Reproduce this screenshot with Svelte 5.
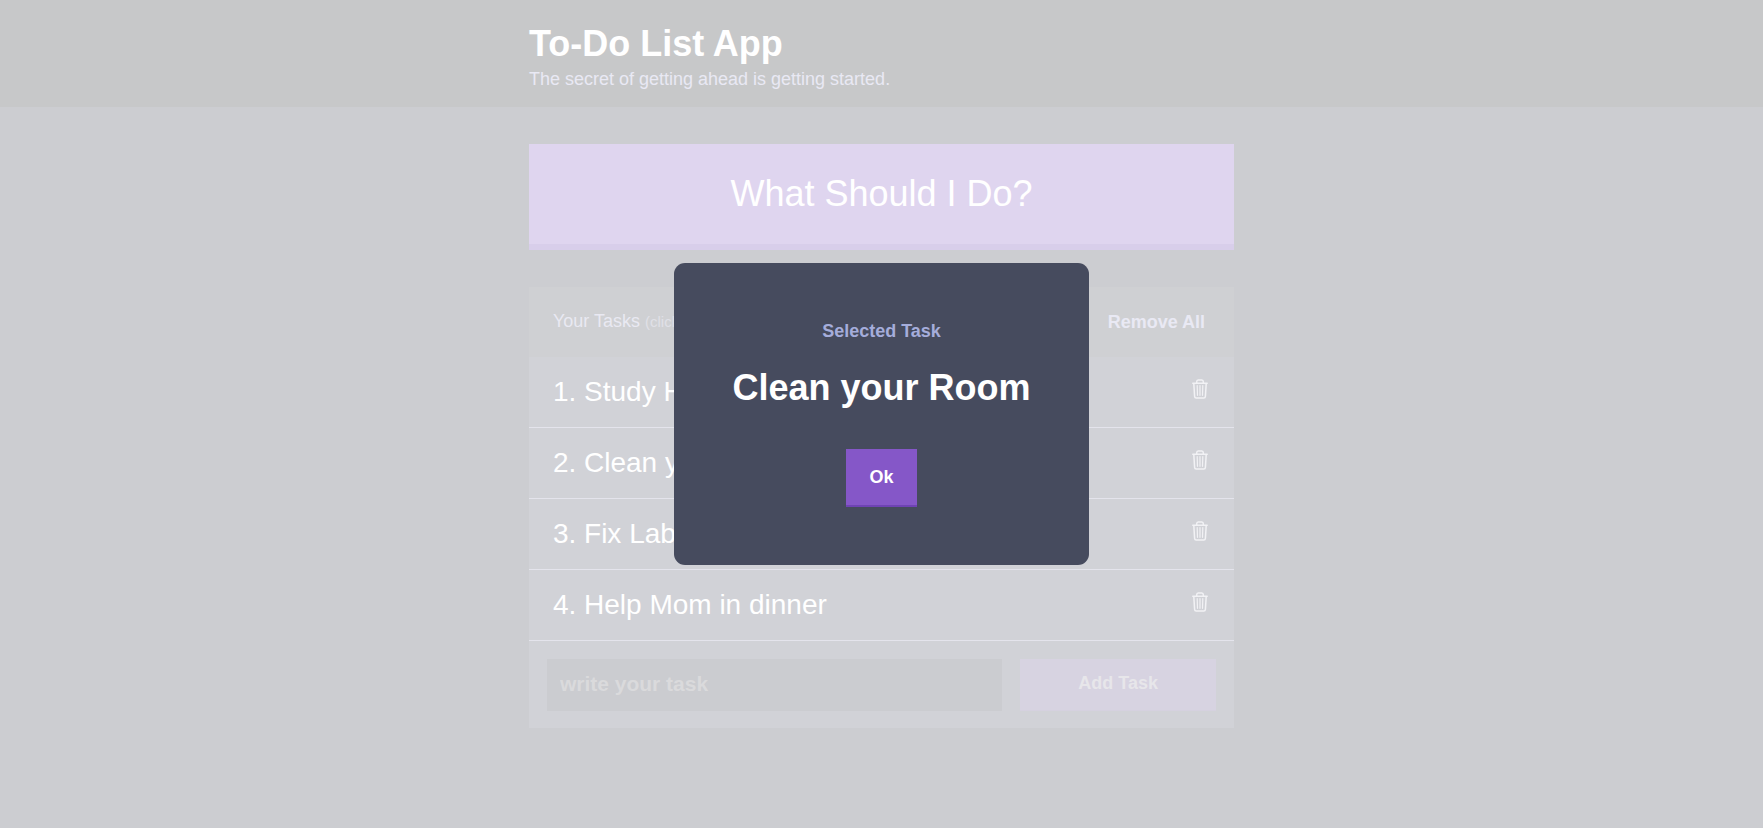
<script>
  let tasks = $state(['Study H', 'Clean your Room', 'Fix Lab', 'Help Mom in dinner']);
  let selected = $state('Clean your Room');
  let draft = $state('');

  function pick() {
    if (tasks.length) selected = tasks[Math.floor(Math.random() * tasks.length)];
  }

  function add(event) {
    event.preventDefault();
    const text = draft.trim();
    if (text) tasks.push(text);
    draft = '';
  }
</script>

<header class="top">
  <div class="container">
    <h1>To-Do List App</h1>
    <p>The secret of getting ahead is getting started.</p>
  </div>
</header>

<main class="container">
  <button class="decide" type="button" onclick={pick}>What Should I Do?</button>

  <section class="card">
    <div class="card-head">
      <h2>Your Tasks <small>(click</small></h2>
      <button class="remove-all" type="button" onclick={() => (tasks = [])}>Remove All</button>
    </div>
    <ul>
      {#each tasks as task, i}
        <li>
          <span>{i + 1}. {task}</span>
          <button class="trash" type="button" aria-label="Remove task" onclick={() => tasks.splice(i, 1)}>
            <svg viewBox="0 0 16 20" width="16" height="20" fill="none" stroke="currentColor" stroke-linecap="round" stroke-linejoin="round">
              <path stroke-width="1.5" d="M0.8 4.3H15.2M1.8 4.5L2.6 17.4Q2.7 19 4.2 19H11.8Q13.3 19 13.4 17.4L14.2 4.5M4.7 4V2.8Q4.7 1 6.2 1H9.8Q11.3 1 11.3 2.8V4" />
              <path stroke-width="1.2" d="M5.2 6.5L5.5 16.3M8 6.5V16.3M10.8 6.5L10.5 16.3" />
            </svg>
          </button>
        </li>
      {/each}
    </ul>
    <form onsubmit={add}>
      <input type="text" aria-label="New task" placeholder="write your task" bind:value={draft} />
      <button class="add" type="submit">Add Task</button>
    </form>
  </section>
</main>

{#if selected}
  <div class="overlay">
    <div class="dialog" role="dialog" aria-modal="true" aria-labelledby="dialog-label">
      <h3 id="dialog-label">Selected Task</h3>
      <p>{selected}</p>
      <button class="ok" type="button" onclick={() => (selected = '')}>Ok</button>
    </div>
  </div>
{/if}

<style>
  :global(body) {
    background: #cccdd1;
    font-family: 'Liberation Sans', Arial, sans-serif;
    font-size: 18px;
  }

  h1, h2, h3, p, ul {
    margin: 0;
    padding: 0;
  }

  button, input {
    box-sizing: border-box;
    border: 0;
    border-radius: 0;
    margin: 0;
    font: inherit;
  }

  button {
    cursor: pointer;
  }

  .container {
    width: 40%;
    margin: 0 auto;
  }

  .top {
    padding: 22px 0 15px;
    background: #c7c8c9;
  }

  h1 {
    color: #fff;
    font-size: 36px;
    line-height: 44px;
  }

  .top p {
    color: #e9e9f4;
    line-height: 26px;
  }

  .decide {
    display: block;
    width: 100%;
    margin: 37px 0;
    padding: 29px 18px 30px;
    border-bottom: 6px solid #d8ceea;
    background: #dfd5ef;
    color: #fff;
    font-size: 36px;
    line-height: 41px;
  }

  .card {
    background: #d1d2d7;
  }

  .card-head {
    display: flex;
    align-items: center;
    justify-content: space-between;
    padding: 21px 24px 22px;
    background: #cfd0d3;
    color: #e9e9f2;
    line-height: 26px;
  }

  h2 {
    font-size: 18px;
    font-weight: 400;
  }

  small {
    font-size: 15px;
    color: #e0e0e7;
  }

  .remove-all {
    padding: 0 5px;
    background: none;
    color: #e9e9f4;
    font-weight: 700;
    line-height: 26px;
  }

  ul {
    list-style: none;
  }

  li {
    display: flex;
    align-items: center;
    justify-content: space-between;
    padding: 19px 24px;
    border-bottom: 1px solid #e4e4ec;
    color: #fff;
    font-size: 28px;
    line-height: 32px;
  }

  .trash {
    display: flex;
    padding: 0 2px 6px;
    background: none;
    color: #f2f2f5;
  }

  form {
    display: flex;
    gap: 18px;
    padding: 18px 18px 17px;
  }

  input {
    flex: 1;
    min-width: 0;
    padding: 13px 13px 15px;
    background: #cbccd0;
    color: #fff;
    font-size: 21px;
    font-weight: 700;
    line-height: 24px;
  }

  input::placeholder {
    color: #dadadc;
    opacity: 1;
  }

  .add {
    width: 196px;
    padding: 10px 18px 12px;
    border-bottom: 1px solid #d5d1df;
    background: #d7d3e1;
    color: #e7e6ea;
    font-weight: 700;
  }

  .overlay {
    position: fixed;
    inset: 0;
    display: flex;
    align-items: center;
    justify-content: center;
  }

  .dialog {
    padding: 55px 58px 58px;
    border-radius: 11px;
    background: #464b5e;
    text-align: center;
  }

  h3 {
    color: #a5addb;
    font-size: 18px;
    line-height: 27px;
  }

  .dialog p {
    margin: 22px 0 41px;
    color: #fff;
    font-size: 36px;
    font-weight: 700;
    line-height: 41px;
  }

  .ok {
    padding: 17px 23px;
    border-bottom: 2px solid #6f43b4;
    background: #8557c8;
    color: #fff;
    font-weight: 700;
    line-height: 22px;
  }
</style>
